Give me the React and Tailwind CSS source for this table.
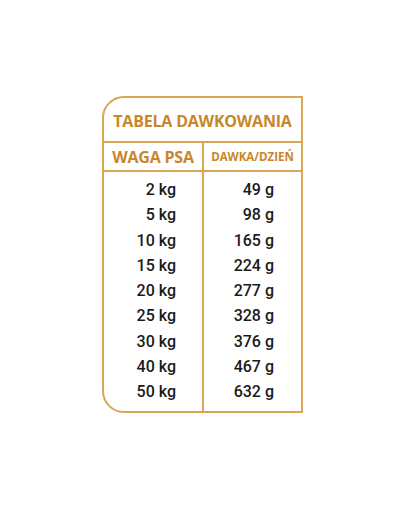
export default function App() {
  const rows = [
    ["2 kg", "49 g"],
    ["5 kg", "98 g"],
    ["10 kg", "165 g"],
    ["15 kg", "224 g"],
    ["20 kg", "277 g"],
    ["25 kg", "328 g"],
    ["30 kg", "376 g"],
    ["40 kg", "467 g"],
    ["50 kg", "632 g"],
  ];
  return (
    <div className="w-[405px] h-[512px] bg-white pt-[96px]">
      <div className="mx-auto w-[201px] h-[317px] border-2 border-[#d8a552] rounded-tl-[22px] rounded-bl-[22px] flex flex-col">
        <div className="h-[45px] flex items-center justify-center border-b-2 border-[#d8a552] pt-[2px]">
          <span className="font-['Open_Sans',sans-serif] font-bold text-[16px] text-[#c7872b] tracking-[-0.2px]">
            TABELA DAWKOWANIA
          </span>
        </div>
        <div className="h-[29px] grid grid-cols-[98px_2px_1fr] border-b-2 border-[#d8a552]">
          <div className="flex items-center justify-center">
            <span className="font-['Open_Sans',sans-serif] font-bold text-[16px] text-[#c7872b] tracking-[-0.2px]">
              WAGA PSA
            </span>
          </div>
          <div className="bg-[#d8a552]" />
          <div className="flex items-center justify-center">
            <span className="font-['Open_Sans',sans-serif] font-bold text-[11.5px] text-[#c7872b]">
              DAWKA/DZIEŃ
            </span>
          </div>
        </div>
        <div className="grid grid-cols-[98px_2px_1fr] flex-1">
          <div className="pt-[5px] pr-[26px] flex flex-col items-end">
            {rows.map((r) => (
              <div key={r[0]} className="h-[25.25px] leading-[25.25px] font-['Roboto',sans-serif] font-medium text-[16px] text-[#1a1a1a]">
                {r[0]}
              </div>
            ))}
          </div>
          <div className="bg-[#d8a552]" />
          <div className="pt-[5px] pr-[27px] flex flex-col items-end">
            {rows.map((r) => (
              <div key={r[1]} className="h-[25.25px] leading-[25.25px] font-['Roboto',sans-serif] font-medium text-[16px] text-[#1a1a1a]">
                {r[1]}
              </div>
            ))}
          </div>
        </div>
      </div>
    </div>
  );
}
